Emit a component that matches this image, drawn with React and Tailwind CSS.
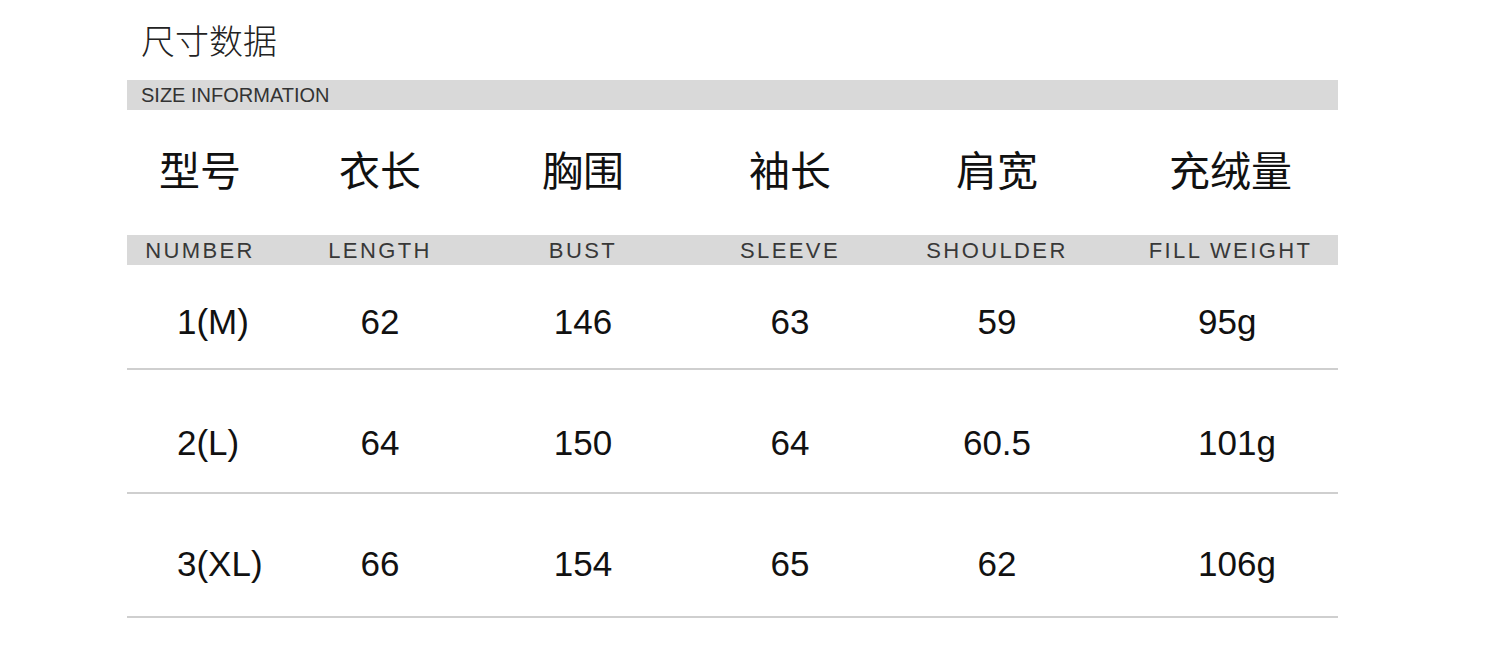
const cols = ["w-[146px]", "w-[214px]", "w-[192px]", "w-[222px]", "w-[192px]", "w-[245px] pl-[30px]"];

const zh = ["型号", "衣长", "胸围", "袖长", "肩宽", "充绒量"];
const en = ["NUMBER", "LENGTH", "BUST", "SLEEVE", "SHOULDER", "FILL WEIGHT"];

const rows = [
  { cells: ["1(M)", "62", "146", "63", "59", "95g"], box: "h-[105px] pt-[12px]" },
  { cells: ["2(L)", "64", "150", "64", "60.5", "101g"], box: "h-[124px] pt-[25px]" },
  { cells: ["3(XL)", "66", "154", "65", "62", "106g"], box: "h-[124px] pt-[19px]" },
];

// first and last data columns are left aligned in the picture
const dataCols = [
  "w-[146px] pl-[50px] text-left",
  "w-[214px] text-center",
  "w-[192px] text-center",
  "w-[222px] text-center",
  "w-[192px] text-center",
  "w-[245px] pl-[105px] text-left",
];

const font = { fontFamily: '"Liberation Sans", "Noto Sans CJK SC", sans-serif' };

const App = () => {
  return (
    <div className="w-[1500px] h-[672px] bg-white pl-[127px]" style={font}>
      <div className="w-[1211px]">
        <div className="h-[80px] flex items-center pl-[14px] pt-[4px] text-[34px] font-light text-[#222]">
          尺寸数据
        </div>
        <div className="h-[30px] bg-[#d9d9d9] flex items-center pl-[14px] text-[20px] text-[#333]">
          SIZE INFORMATION
        </div>

        <div className="h-[125px] flex items-center">
          {zh.map((t, i) => (
            <div key={t} className={`${cols[i]} text-center text-[41px] text-[#111]`}>
              {t}
            </div>
          ))}
        </div>

        <div className="h-[30px] bg-[#d9d9d9] flex items-center">
          {en.map((t, i) => (
            <div key={t} className={`${cols[i]} text-center text-[22px] tracking-[2.4px] text-[#383838]`}>
              {t}
            </div>
          ))}
        </div>

        {rows.map((r, ri) => (
          <div key={ri} className={`${r.box} flex items-center border-b-2 border-[#cfcfcf]`}>
            {r.cells.map((c, i) => (
              <div key={i} className={`${dataCols[i]} text-[35px] text-[#111]`}>
                {c}
              </div>
            ))}
          </div>
        ))}
      </div>
    </div>
  );
};

export default App;
